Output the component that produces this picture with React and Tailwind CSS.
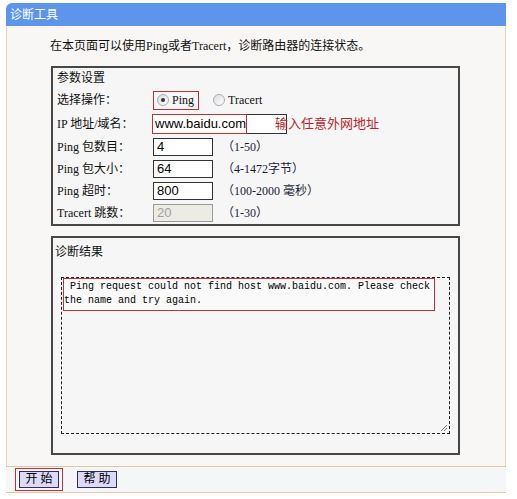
import React from 'react'

const CN = { fontFamily: '"Liberation Serif", "Noto Sans CJK SC", serif' }
const SANS = { fontFamily: '"Liberation Sans", Arial, sans-serif' }
const MONO = { fontFamily: '"Liberation Mono", "Courier New", monospace' }

const ROWS = [
  { label: 'Ping 包数目：', value: '4', hint: '（1-50）' },
  { label: 'Ping 包大小：', value: '64', hint: '（4-1472字节）' },
  { label: 'Ping 超时：', value: '800', hint: '（100-2000 毫秒）' },
  { label: 'Tracert 跳数：', value: '20', hint: '（1-30）', disabled: true },
]

function Radio({ checked }) {
  return (
    <span className="w-[12px] h-[12px] rounded-full border border-[#a5acb5] bg-gradient-to-br from-[#dcdcdc] to-white flex items-center justify-center shrink-0">
      {checked && <span className="w-[4px] h-[4px] rounded-full bg-[#333]" />}
    </span>
  )
}

function Btn({ children }) {
  return (
    <button className="w-[40px] h-[17px] border border-[#2e2e5e] bg-[#dcdaf6] text-[12px] leading-[15px] text-black" style={CN}>
      {children}
    </button>
  )
}

export default function App() {
  return (
    <div className="w-[517px] h-[499px] bg-white pt-[3px] pl-[6px] text-[12px] text-[#111]" style={CN}>
      <div className="w-[500px]">
        {/* header */}
        <div className="h-[23px] bg-[#5c95eb] rounded-tl-[6px] text-white text-[12px] pl-[4px] flex items-center" style={CN}>
          诊断工具
        </div>

        {/* body */}
        <div className="h-[440px] border-x border-[#e6d3bd] bg-[#f8f7f5] flex flex-col">
          <div className="pt-[13px] pl-[43px] h-[27px] leading-[14px]">
            在本页面可以使用Ping或者Tracert，诊断路由器的连接状态。
          </div>

          {/* params */}
          <div className="mt-[13px] ml-[44px] w-[409px] h-[160px] border-2 border-[#474747] bg-[#f6f6f6] flex flex-col pl-[4px]">
            <div className="h-[20px] flex items-center">参数设置</div>

            <div className="h-[24px] flex items-center">
              <span className="w-[96px]">选择操作：</span>
              <span className="h-[19px] w-[46px] border border-[#c0303a] flex items-center pl-[3px] gap-[3px]">
                <Radio checked />
                <span>Ping</span>
              </span>
              <span className="ml-[14px] flex items-center gap-[3px]">
                <Radio />
                <span>Tracert</span>
              </span>
            </div>

            <div className="h-[24px] flex items-center">
              <span className="w-[95px]">IP 地址/域名：</span>
              <span className="relative w-[135px] h-[20px] shrink-0 border border-[#333] bg-white flex items-center pl-[2px] text-[13px] text-black" style={SANS}>
                www.baidu.com
                <span className="absolute -left-px -top-px w-[95px] h-[20px] border border-[#c0303a]" />
              </span>
              <span className="relative ml-[-12px] text-[13px] text-[#b8242c]" style={CN}>输入任意外网地址</span>
            </div>

            {ROWS.map(r => (
              <div key={r.label} className="h-[22px] flex items-center">
                <span className="w-[96px]">{r.label}</span>
                <span
                  className={
                    r.disabled
                      ? 'w-[60px] h-[18px] border border-[#9a9a9a] bg-[#ecebe4] text-[#a0a0a0] flex items-center pl-[3px] text-[13px]'
                      : 'w-[60px] h-[18px] border border-[#333] bg-white text-black flex items-center pl-[3px] text-[13px]'
                  }
                  style={SANS}
                >
                  {r.value}
                </span>
                <span className="ml-[9px] text-[#1c1c3a]">{r.hint}</span>
              </div>
            ))}
          </div>

          {/* result */}
          <div className="mt-[10px] ml-[44px] w-[409px] h-[219px] border-2 border-[#474747] bg-[#f6f6f6] flex flex-col">
            <div className="h-[21px] pl-[2px] flex items-end leading-[14px]">诊断结果</div>
            <div className="relative mt-[18px] ml-[8px] w-[389px] h-[157px] border border-dashed border-[#222]">
              <div className="ml-[1px] mt-0 w-[372px] h-[33px] border border-[#c0303a] bg-[#fafafa]">
                <pre className="text-[10px] leading-[14px] pt-[1px] text-black whitespace-pre" style={MONO}>
{` Ping request could not find host www.baidu.com. Please check
the name and try again.`}
                </pre>
              </div>
              <svg className="absolute right-[1px] bottom-[1px]" width="9" height="9" viewBox="0 0 9 9">
                <path d="M8 2 L2 8 M8 5 L5 8" stroke="#777" strokeWidth="1" />
              </svg>
            </div>
          </div>
        </div>

        {/* buttons */}
        <div className="h-[27px] border-y border-[#e3c8a8] bg-[#f4f6f8] flex items-center pl-[9px]">
          <span className="border border-[#c0303a] py-[2px] px-[3px] flex">
            <Btn>开 始</Btn>
          </span>
          <span className="ml-[14px] flex">
            <Btn>帮 助</Btn>
          </span>
        </div>
      </div>
    </div>
  )
}
